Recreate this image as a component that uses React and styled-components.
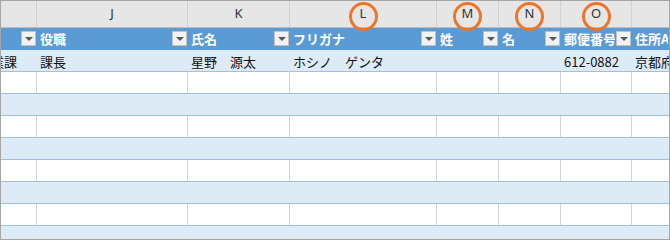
import React from 'react'
import styled, { createGlobalStyle } from 'styled-components'

const Global = createGlobalStyle`
    html, body {
        margin: 0;
        padding: 0;
        background: #ffffff;
    }
    body {
        font-family: "Noto Sans CJK JP", "Noto Sans", sans-serif;
    }
`

const Sheet = styled.div`
    width: 670px;
    height: 240px;
    box-sizing: border-box;
    border: 1px solid #a6a6a6;
    overflow: hidden;
    background: #ffffff;
`

const Row = styled.div`
    display: grid;
    grid-template-columns: 36px 151px 102px 147px 62px 62px 71px 1fr;
    height: ${p => p.$h}px;
    box-sizing: border-box;
    background: ${p => p.$bg};
    border-bottom: 1px solid ${p => p.$line};
`

const LetterCell = styled.div`
    position: relative;
    display: flex;
    align-items: center;
    justify-content: center;
    border-right: 1px solid #d0d0d0;
    font-family: "Noto Sans", "Liberation Sans", sans-serif;
    font-size: 13px;
    color: #333333;
    padding-bottom: 2px;
    &:last-child {
        border-right: none;
    }
`

const Ring = styled.span`
    position: absolute;
    left: 50%;
    top: 1px;
    width: 29px;
    height: 29px;
    margin-left: -14.5px;
    box-sizing: border-box;
    border: 3px solid #f07428;
    border-radius: 50%;
    z-index: 2;
`

const HeadCell = styled.div`
    display: flex;
    align-items: center;
    min-width: 0;
    overflow: hidden;
    padding-left: 3px;
    padding-right: 1px;
    color: #ffffff;
    font-weight: 700;
    font-size: 13px;
    white-space: nowrap;
`

const HeadLabel = styled.span`
    flex: 1;
    min-width: 0;
    overflow: hidden;
`

const Filter = styled.span`
    flex: none;
    width: 15px;
    height: 15px;
    box-sizing: border-box;
    margin-left: 1px;
    background: #f2f2f2;
    border: 1px solid #c0c0c0;
    display: flex;
    align-items: center;
    justify-content: center;
    &::after {
        content: "";
        border-left: 4px solid transparent;
        border-right: 4px solid transparent;
        border-top: 4px solid #595959;
        margin-top: 1px;
    }
`

const Cell = styled.div`
    display: flex;
    align-items: center;
    justify-content: ${p => (p.$clip ? 'flex-end' : 'flex-start')};
    min-width: 0;
    overflow: hidden;
    white-space: nowrap;
    padding-left: ${p => (p.$clip ? 0 : 3)}px;
    padding-right: ${p => (p.$clip ? 19 : 0)}px;
    padding-top: 2px;
    font-size: 13px;
    color: #111111;
    border-right: 1px solid ${p => (p.$grid ? '#d4d4d4' : 'transparent')};
    &:last-child {
        border-right: none;
    }
`

const letters = ['', 'J', 'K', 'L', 'M', 'N', 'O', '']
const circled = ['L', 'M', 'N', 'O']
const heads = ['', '役職', '氏名', 'フリガナ', '姓', '名', '郵便番号', '住所A']
const firstRow = ['営業課', '課長', '星野　源太', 'ホシノ　ゲンタ', '', '', '612-0882', '京都府']

const SheetRow = ({ values, striped }) => (
    <Row $h={22} $bg={striped ? '#ddebf7' : '#ffffff'} $line="#9bc2e6">
        {values.map((v, i) => (
            <Cell key={i} $clip={i === 0} $grid={!striped}>{v}</Cell>
        ))}
    </Row>
)

const App = () => {
    const blank = ['', '', '', '', '', '', '', '']
    const rest = [false, true, false, true, false, true, false, true]
    return (
        <Sheet>
            <Global />
            <Row $h={27} $bg="#e6e6e6" $line="#bdbdbd">
                {letters.map((l, i) => (
                    <LetterCell key={i}>
                        {l}
                        {circled.includes(l) && <Ring />}
                    </LetterCell>
                ))}
            </Row>
            <Row $h={22} $bg="#5b9bd5" $line="#5b9bd5">
                {heads.map((h, i) => (
                    <HeadCell key={i}>
                        <HeadLabel>{h}</HeadLabel>
                        {i < 7 && <Filter />}
                    </HeadCell>
                ))}
            </Row>
            <SheetRow values={firstRow} striped />
            {rest.map((s, i) => (
                <SheetRow key={i} values={blank} striped={s} />
            ))}
        </Sheet>
    )
}

export default App
